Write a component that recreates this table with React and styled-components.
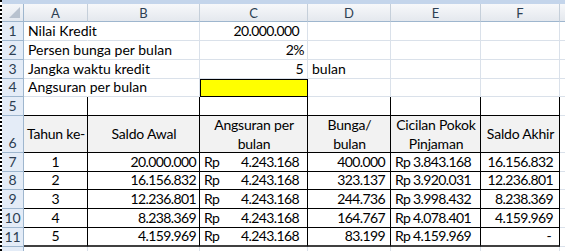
import React from "react";
import styled, { createGlobalStyle } from "styled-components";

const GlobalStyle = createGlobalStyle`
  html, body {
    margin: 0;
    padding: 0;
    background: #ffffff;
  }
  body {
    font-family: "Lato", "Liberation Sans", sans-serif;
  }
`;

const COLS = ["A", "B", "C", "D", "E", "F"];
const ROW_H = [19, 19, 19, 18, 19, 37, 19, 18, 19, 19, 19, 12];

const Frame = styled.div`
  width: 565px;
  height: 251px;
  overflow: hidden;
  border-left: 2px dotted #000;
  box-sizing: border-box;
  background: #fff;
`;

const TopBand = styled.div`
  height: 4px;
  background: #c4d5eb;
`;

const Sheet = styled.div`
  display: grid;
  grid-template-columns: 22px 64px 112px 108px 83px 90px 79px 1fr;
  grid-template-rows: 18px ${ROW_H.map((h) => h + "px").join(" ")};
  font-size: 14px;
  color: #000;
`;

const Corner = styled.div`
  background: linear-gradient(#f4f6f9, #e3e8ef);
  border-right: 1px solid #9eb6ce;
  border-bottom: 1px solid #9eb6ce;
  position: relative;
  &::after {
    content: "";
    position: absolute;
    right: 3px;
    bottom: 3px;
    border-style: solid;
    border-width: 0 0 11px 11px;
    border-color: transparent transparent #b8c2cf transparent;
  }
`;

const ColHead = styled.div`
  background: linear-gradient(#f7f8fa, #e4e8ee);
  border-right: 1px solid #c5cfda;
  border-bottom: 1px solid #9eb6ce;
  display: flex;
  align-items: center;
  justify-content: center;
  font-size: 13px;
  color: #2d3e52;
`;

const RowHead = styled.div`
  background: #e4ecf7;
  border-right: 1px solid #9eb6ce;
  border-bottom: 1px solid #9eb6ce;
  display: flex;
  align-items: flex-end;
  justify-content: center;
  padding-bottom: 1px;
  font-size: 14px;
  color: #2d3e52;
  line-height: 17px;
  overflow: hidden;
`;

const Cell = styled.div`
  position: relative;
  box-sizing: border-box;
  border-right: 1px solid ${(p) => (p.$noRight ? "transparent" : p.$box ? "#000" : "#dae1ea")};
  border-bottom: ${(p) => (p.$thick ? "2px solid #404040" : p.$box ? "1px solid #000" : "1px solid #dae1ea")};
  background: ${(p) => p.$bg || "transparent"};
  display: flex;
  align-items: ${(p) => (p.$head ? "center" : "flex-end")};
  justify-content: ${(p) =>
    p.$align === "right" ? "flex-end" : p.$align === "center" ? "center" : "flex-start"};
  text-align: center;
  padding: 0 ${(p) => (p.$pr ?? 4)}px 1px 4px;
  white-space: nowrap;
  line-height: ${(p) => (p.$head ? "19px" : "17px")};
  letter-spacing: ${(p) => (p.$num ? "-0.6px" : p.$head ? "-0.2px" : "0")};
  overflow: visible;
  z-index: ${(p) => (p.$over ? 2 : 1)};
`;

const Yellow = styled(Cell)`
  border: 1px solid #000;
  background: #ffff00;
`;

const Money = styled.span`
  display: flex;
  justify-content: space-between;
  width: 100%;
`;

const inputs = [
  ["Nilai Kredit", "20.000.000", 8, ""],
  ["Persen bunga per bulan", "2%", 3, ""],
  ["Jangka waktu kredit", "5", 4, "bulan"],
  ["Angsuran per bulan", null, 0, ""],
];

const heads = [
  ["Tahun ke-"],
  ["Saldo Awal"],
  ["Angsuran per", "bulan"],
  ["Bunga/", "bulan"],
  ["Cicilan Pokok", "Pinjaman"],
  ["Saldo Akhir"],
];

const rows = [
  ["1", "20.000.000", "4.243.168", "400.000", "3.843.168", "16.156.832"],
  ["2", "16.156.832", "4.243.168", "323.137", "3.920.031", "12.236.801"],
  ["3", "12.236.801", "4.243.168", "244.736", "3.998.432", "8.238.369"],
  ["4", "8.238.369", "4.243.168", "164.767", "4.078.401", "4.159.969"],
  ["5", "4.159.969", "4.243.168", "83.199", "4.159.969", "-"],
];

const Blank = () => <Cell />;

export default function App() {
  return (
    <Frame>
      <GlobalStyle />
      <TopBand />
      <Sheet>
        <Corner />
        {COLS.map((c) => (
          <ColHead key={c}>{c}</ColHead>
        ))}
        <ColHead />

        {inputs.map(([label, value, pr, unit], i) => (
          <React.Fragment key={label}>
            <RowHead>{i + 1}</RowHead>
            <Cell $noRight $over>{label}</Cell>
            <Cell />
            {value === null ? (
              <Yellow />
            ) : (
              <Cell $align="right" $pr={pr} $num>
                {value}
              </Cell>
            )}
            <Cell>{unit}</Cell>
            <Blank />
            <Blank />
            <Blank />
          </React.Fragment>
        ))}

        <RowHead>5</RowHead>
        {COLS.map((c) => (
          <Cell key={c} $box />
        ))}
        <Blank />

        <RowHead>6</RowHead>
        {heads.map((h) => (
          <Cell key={h[0]} $box $head $align="center" $bg="#f2f2f2" $pr={3}>
            <span>
              {h.map((line, j) => (
                <React.Fragment key={line}>
                  {j > 0 && <br />}
                  {line}
                </React.Fragment>
              ))}
            </span>
          </Cell>
        ))}
        <Blank />

        {rows.map((r, i) => {
          const last = i === rows.length - 1;
          return (
            <React.Fragment key={r[0]}>
              <RowHead>{7 + i}</RowHead>
              <Cell $box $thick={last} $align="center">
                {r[0]}
              </Cell>
              <Cell $box $thick={last} $align="right" $pr={3} $num>
                {r[1]}
              </Cell>
              <Cell $box $thick={last} $pr={8} $num>
                <Money>
                  <span>Rp</span>
                  <span>{r[2]}</span>
                </Money>
              </Cell>
              <Cell $box $thick={last} $align="right" $pr={5} $num>
                {r[3]}
              </Cell>
              <Cell $box $thick={last} $pr={9} $num>
                <Money>
                  <span>Rp</span>
                  <span>{r[4]}</span>
                </Money>
              </Cell>
              <Cell $box $thick={last} $align="right" $pr={r[5] === "-" ? 8 : 6} $num>
                {r[5]}
              </Cell>
              <Blank />
            </React.Fragment>
          );
        })}

        <RowHead />
        {COLS.map((c) => (
          <Cell key={c} />
        ))}
        <Blank />
      </Sheet>
    </Frame>
  );
}
